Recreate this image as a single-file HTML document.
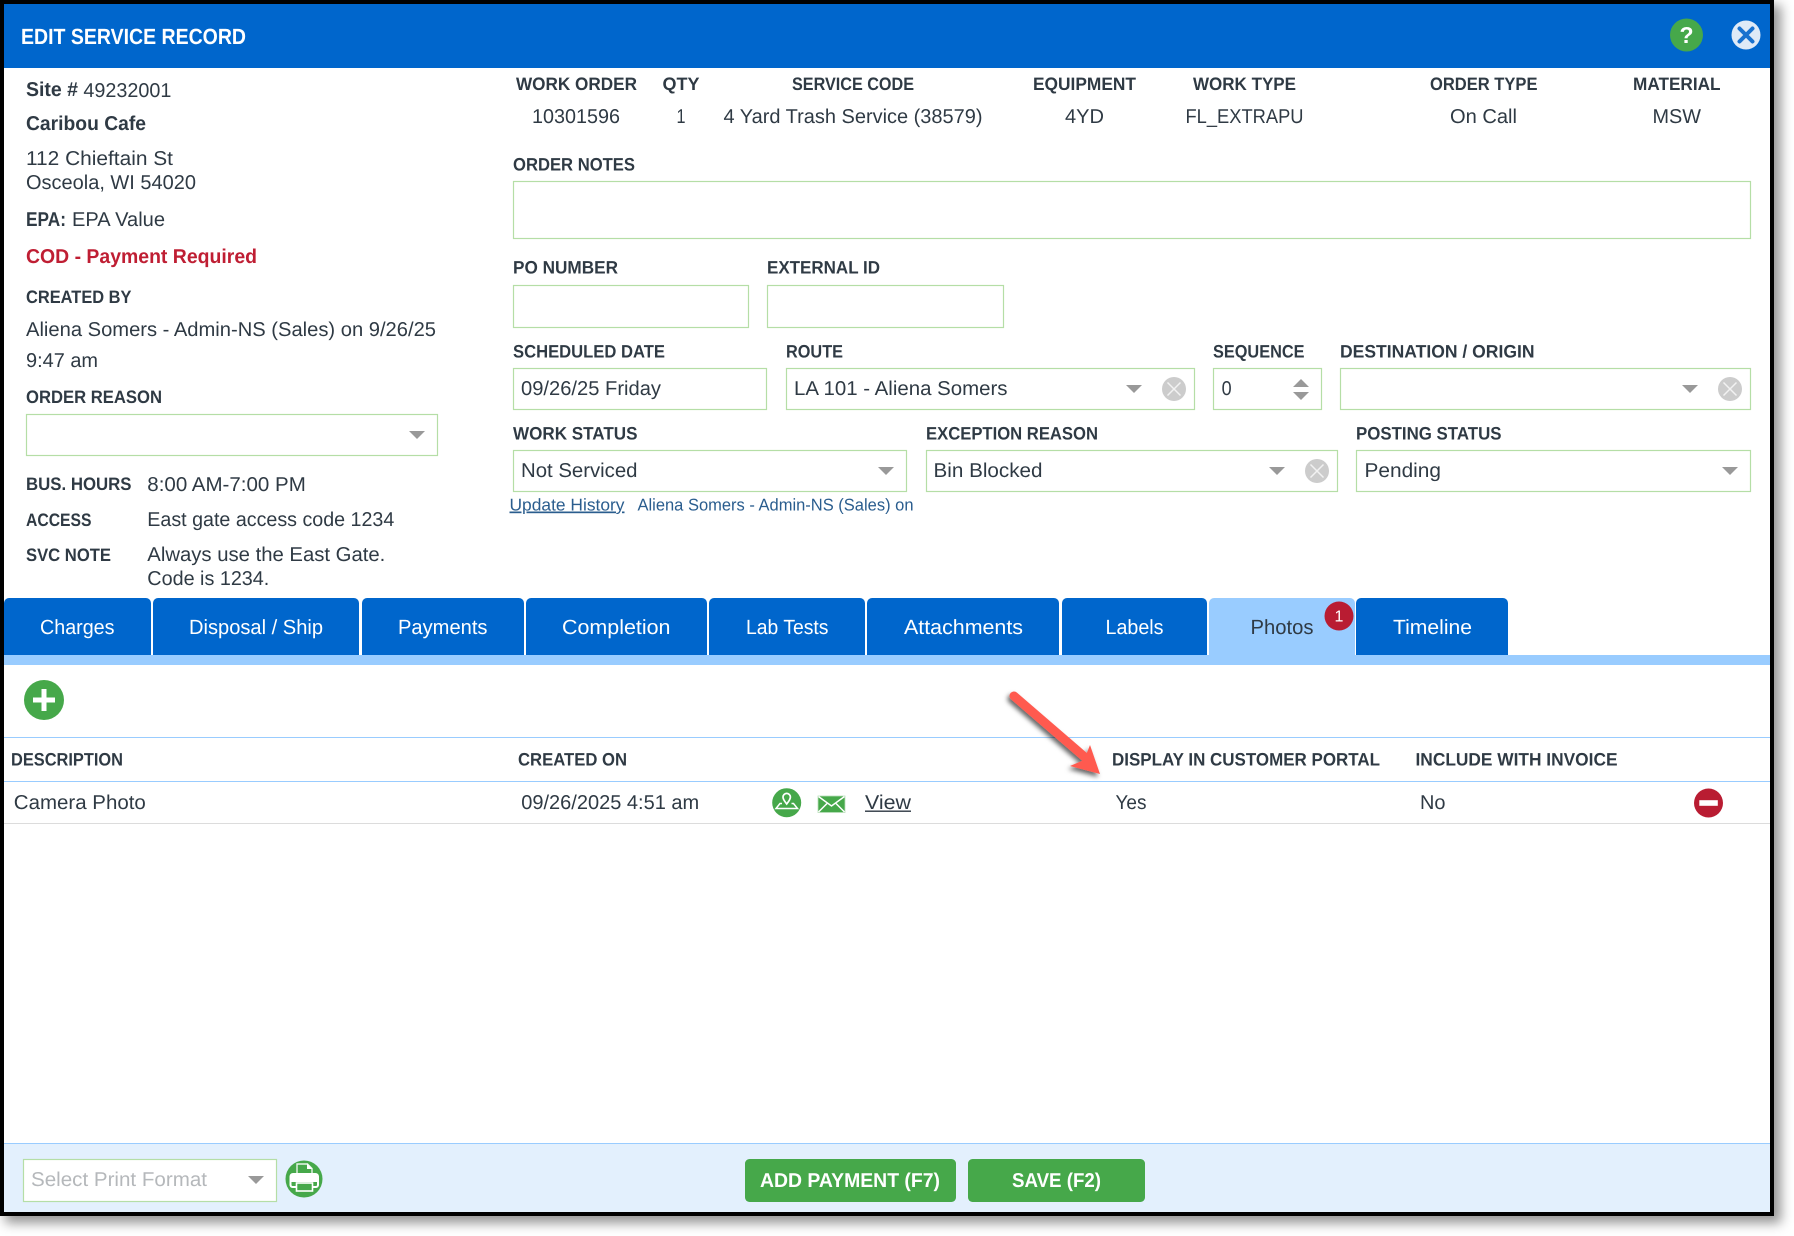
<!DOCTYPE html>
<html><head><meta charset="utf-8"><title>Edit Service Record</title>
<style>
html,body{margin:0;padding:0;background:#fff;width:1794px;height:1236px;overflow:hidden}
#frame{position:absolute;left:0;top:0;width:1774px;height:1216px;background:#000;box-shadow:6px 6px 11px 1px rgba(0,0,0,.42)}
svg{position:absolute;left:0;top:0}
text{font-family:"Liberation Sans",sans-serif;fill:#2f3a44;font-size:20px}
.b{font-weight:700;font-size:18px}
.w{fill:#fff}
.tab{fill:#fff;font-size:20.5px}
.box{fill:#fff;stroke:#b5dea6;stroke-width:1.2}
.arr{fill:#999}
</style></head><body>
<div id="frame"></div>
<svg width="1794" height="1236" viewBox="0 0 1794 1236" xmlns="http://www.w3.org/2000/svg" text-rendering="geometricPrecision">
<defs>
<filter id="sh" x="-30%" y="-30%" width="170%" height="170%"><feDropShadow dx="-2" dy="3" stdDeviation="2.5" flood-color="#000" flood-opacity=".6"/></filter>
<g id="clr"><circle r="12" fill="#ccc"/><path d="M-6.5-6.5L6.5 6.5M6.5-6.5L-6.5 6.5" stroke="#f2f2f2" stroke-width="1.5"/></g>
<path id="dd" class="arr" d="M-8-4H8L0 4Z"/>
</defs>
<rect x="4" y="4" width="1766" height="1208" fill="#fff"/>
<rect x="4" y="4" width="1766" height="64" fill="#0066cc"/>
<text x="21" y="44" class="b w" style="font-size:22px" textLength="225" lengthAdjust="spacingAndGlyphs">EDIT SERVICE RECORD</text>
<circle cx="1686.5" cy="35" r="16.5" fill="#46a84a"/>
<text x="1686.5" y="43" text-anchor="middle" class="b w" style="font-size:23px">?</text>
<circle cx="1746" cy="35" r="14.5" fill="#dfeaf7"/>
<path d="M1739.5 28.5L1752.5 41.5M1752.5 28.5L1739.5 41.5" stroke="#1a72cf" stroke-width="4" stroke-linecap="round"/>

<!-- left column -->
<text x="26" y="96" class="b" style="font-size:20px" textLength="52" lengthAdjust="spacingAndGlyphs">Site #</text>
<text x="83.4" y="97" textLength="88" lengthAdjust="spacingAndGlyphs">49232001</text>
<text x="26" y="130" class="b" style="font-size:20px" textLength="120" lengthAdjust="spacingAndGlyphs">Caribou Cafe</text>
<text x="26" y="165" textLength="147" lengthAdjust="spacingAndGlyphs">112 Chieftain St</text>
<text x="26" y="189" textLength="170" lengthAdjust="spacingAndGlyphs">Osceola, WI 54020</text>
<text x="26" y="226" class="b" style="font-size:20px" textLength="40" lengthAdjust="spacingAndGlyphs">EPA:</text>
<text x="72" y="226" textLength="93" lengthAdjust="spacingAndGlyphs">EPA Value</text>
<text x="26" y="263" class="b" style="font-size:20px;fill:#bf1e33" textLength="231" lengthAdjust="spacingAndGlyphs">COD - Payment Required</text>
<text x="26" y="303" class="b" textLength="105.5" lengthAdjust="spacingAndGlyphs">CREATED BY</text>
<text x="26" y="336" textLength="410" lengthAdjust="spacingAndGlyphs">Aliena Somers - Admin-NS (Sales) on 9/26/25</text>
<text x="26" y="367" textLength="72" lengthAdjust="spacingAndGlyphs">9:47 am</text>
<text x="26" y="403" class="b" textLength="136" lengthAdjust="spacingAndGlyphs">ORDER REASON</text>
<rect class="box" x="26.5" y="414.5" width="411" height="41"/>
<use href="#dd" x="417" y="435"/>
<text x="26" y="490" class="b" textLength="105.5" lengthAdjust="spacingAndGlyphs">BUS. HOURS</text>
<text x="147.3" y="491" textLength="158.5" lengthAdjust="spacingAndGlyphs">8:00 AM-7:00 PM</text>
<text x="26" y="526" class="b" textLength="65.5" lengthAdjust="spacingAndGlyphs">ACCESS</text>
<text x="147.3" y="526" textLength="247" lengthAdjust="spacingAndGlyphs">East gate access code 1234</text>
<text x="26" y="561" class="b" textLength="85" lengthAdjust="spacingAndGlyphs">SVC NOTE</text>
<text x="147.3" y="561" textLength="238" lengthAdjust="spacingAndGlyphs">Always use the East Gate.</text>
<text x="147.3" y="585" textLength="122" lengthAdjust="spacingAndGlyphs">Code is 1234.</text>

<!-- top row -->
<text x="516" y="90" class="b" textLength="121" lengthAdjust="spacingAndGlyphs">WORK ORDER</text>
<text x="532" y="123" textLength="88" lengthAdjust="spacingAndGlyphs">10301596</text>
<text x="662.5" y="90" class="b" textLength="37" lengthAdjust="spacingAndGlyphs">QTY</text>
<text x="676.5" y="123" textLength="9" lengthAdjust="spacingAndGlyphs">1</text>
<text x="792" y="90" class="b" textLength="122" lengthAdjust="spacingAndGlyphs">SERVICE CODE</text>
<text x="723.5" y="123" textLength="259" lengthAdjust="spacingAndGlyphs">4 Yard Trash Service (38579)</text>
<text x="1033" y="90" class="b" textLength="103" lengthAdjust="spacingAndGlyphs">EQUIPMENT</text>
<text x="1065" y="123" textLength="39" lengthAdjust="spacingAndGlyphs">4YD</text>
<text x="1193" y="90" class="b" textLength="103" lengthAdjust="spacingAndGlyphs">WORK TYPE</text>
<text x="1185.5" y="123" textLength="118" lengthAdjust="spacingAndGlyphs">FL_EXTRAPU</text>
<text x="1430" y="90" class="b" textLength="107.5" lengthAdjust="spacingAndGlyphs">ORDER TYPE</text>
<text x="1450" y="123" textLength="67" lengthAdjust="spacingAndGlyphs">On Call</text>
<text x="1633" y="90" class="b" textLength="87.5" lengthAdjust="spacingAndGlyphs">MATERIAL</text>
<text x="1652.5" y="123" textLength="48.5" lengthAdjust="spacingAndGlyphs">MSW</text>

<!-- form -->
<text x="513" y="170.5" class="b" textLength="122" lengthAdjust="spacingAndGlyphs">ORDER NOTES</text>
<rect class="box" x="513.5" y="181.5" width="1237" height="57"/>
<text x="513" y="273.5" class="b" textLength="105" lengthAdjust="spacingAndGlyphs">PO NUMBER</text>
<text x="767" y="273.5" class="b" textLength="113" lengthAdjust="spacingAndGlyphs">EXTERNAL ID</text>
<rect class="box" x="513.5" y="285.5" width="235" height="42"/>
<rect class="box" x="767.5" y="285.5" width="236" height="42"/>

<text x="513" y="357.5" class="b" textLength="152" lengthAdjust="spacingAndGlyphs">SCHEDULED DATE</text>
<text x="786" y="357.5" class="b" textLength="57" lengthAdjust="spacingAndGlyphs">ROUTE</text>
<text x="1213" y="357.5" class="b" textLength="91.5" lengthAdjust="spacingAndGlyphs">SEQUENCE</text>
<text x="1340" y="357.5" class="b" textLength="194.5" lengthAdjust="spacingAndGlyphs">DESTINATION / ORIGIN</text>
<rect class="box" x="513.5" y="368.5" width="253" height="41"/>
<rect class="box" x="786.5" y="368.5" width="408" height="41"/>
<rect class="box" x="1213.5" y="368.5" width="108" height="41"/>
<rect class="box" x="1340.5" y="368.5" width="410" height="41"/>
<text x="521" y="395" textLength="140" lengthAdjust="spacingAndGlyphs">09/26/25 Friday</text>
<text x="794" y="395" textLength="213.5" lengthAdjust="spacingAndGlyphs">LA 101 - Aliena Somers</text>
<use href="#dd" x="1134" y="389"/><use href="#clr" x="1174" y="389"/>
<text x="1221.6" y="395" textLength="10" lengthAdjust="spacingAndGlyphs">0</text>
<path class="arr" d="M1293 387L1301 379L1309 387ZM1293 392H1309L1301 400Z"/>
<use href="#dd" x="1690" y="389"/><use href="#clr" x="1730" y="389"/>

<text x="513" y="439.5" class="b" textLength="124.5" lengthAdjust="spacingAndGlyphs">WORK STATUS</text>
<text x="926" y="439.5" class="b" textLength="172" lengthAdjust="spacingAndGlyphs">EXCEPTION REASON</text>
<text x="1356" y="439.5" class="b" textLength="145.5" lengthAdjust="spacingAndGlyphs">POSTING STATUS</text>
<rect class="box" x="513.5" y="450.5" width="393" height="41"/>
<rect class="box" x="926.5" y="450.5" width="411" height="41"/>
<rect class="box" x="1356.5" y="450.5" width="394" height="41"/>
<text x="521" y="477" textLength="116.5" lengthAdjust="spacingAndGlyphs">Not Serviced</text>
<text x="933.5" y="477" textLength="109" lengthAdjust="spacingAndGlyphs">Bin Blocked</text>
<text x="1364.5" y="477" textLength="76.5" lengthAdjust="spacingAndGlyphs">Pending</text>
<use href="#dd" x="886" y="471"/><use href="#dd" x="1277" y="471"/><use href="#clr" x="1317" y="471"/><use href="#dd" x="1730" y="471"/>
<text x="509.5" y="510.5" style="font-size:17px;fill:#2a5d8e;text-decoration:underline" textLength="115" lengthAdjust="spacingAndGlyphs">Update History</text>
<text x="637.5" y="510.5" style="font-size:17px;fill:#2a5d8e" textLength="276" lengthAdjust="spacingAndGlyphs">Aliena Somers - Admin-NS (Sales) on</text>

<!-- tabs -->
<path fill="#0066cc" d="M4 655V603a5 5 0 0 1 5-5H146a5 5 0 0 1 5 5V655Z"/>
<path fill="#0066cc" d="M153 655V603a5 5 0 0 1 5-5H354a5 5 0 0 1 5 5V655Z"/>
<path fill="#0066cc" d="M362 655V603a5 5 0 0 1 5-5H519a5 5 0 0 1 5 5V655Z"/>
<path fill="#0066cc" d="M526 655V603a5 5 0 0 1 5-5H702a5 5 0 0 1 5 5V655Z"/>
<path fill="#0066cc" d="M709 655V603a5 5 0 0 1 5-5H860a5 5 0 0 1 5 5V655Z"/>
<path fill="#0066cc" d="M867 655V603a5 5 0 0 1 5-5H1054a5 5 0 0 1 5 5V655Z"/>
<path fill="#0066cc" d="M1062 655V603a5 5 0 0 1 5-5H1202a5 5 0 0 1 5 5V655Z"/>
<path fill="#99ccff" d="M1209 655V603a5 5 0 0 1 5-5H1350a5 5 0 0 1 5 5V655Z"/>
<path fill="#0066cc" d="M1356 655V603a5 5 0 0 1 5-5H1503a5 5 0 0 1 5 5V655Z"/>
<rect x="4" y="655" width="1766" height="10" fill="#99ccff"/>
<text x="40" y="634" class="tab" textLength="74.5" lengthAdjust="spacingAndGlyphs">Charges</text>
<text x="189" y="634" class="tab" textLength="134" lengthAdjust="spacingAndGlyphs">Disposal / Ship</text>
<text x="398" y="634" class="tab" textLength="89.5" lengthAdjust="spacingAndGlyphs">Payments</text>
<text x="562" y="634" class="tab" textLength="108.5" lengthAdjust="spacingAndGlyphs">Completion</text>
<text x="746" y="634" class="tab" textLength="82.5" lengthAdjust="spacingAndGlyphs">Lab Tests</text>
<text x="904" y="634" class="tab" textLength="119" lengthAdjust="spacingAndGlyphs">Attachments</text>
<text x="1105.5" y="634" class="tab" textLength="58" lengthAdjust="spacingAndGlyphs">Labels</text>
<text x="1250.5" y="634" class="tab" style="fill:#2f3a44" textLength="63" lengthAdjust="spacingAndGlyphs">Photos</text>
<text x="1393" y="634" class="tab" textLength="79" lengthAdjust="spacingAndGlyphs">Timeline</text>
<circle cx="1339" cy="616" r="14.5" fill="#b91c32"/>
<text x="1339" y="621.5" text-anchor="middle" class="w" style="font-size:16px">1</text>

<!-- table -->
<circle cx="44" cy="700" r="20" fill="#46a84a"/>
<path d="M44 689V711M33 700H55" stroke="#fff" stroke-width="5"/>
<rect x="4" y="737" width="1766" height="1" fill="#99ccff"/>
<rect x="4" y="781" width="1766" height="1" fill="#99ccff"/>
<rect x="4" y="823" width="1766" height="1" fill="#dcdcdc"/>
<text x="11" y="765.5" class="b" textLength="112" lengthAdjust="spacingAndGlyphs">DESCRIPTION</text>
<text x="518" y="765.5" class="b" textLength="109" lengthAdjust="spacingAndGlyphs">CREATED ON</text>
<text x="1112" y="765.5" class="b" textLength="268" lengthAdjust="spacingAndGlyphs">DISPLAY IN CUSTOMER PORTAL</text>
<text x="1415.5" y="765.5" class="b" textLength="202" lengthAdjust="spacingAndGlyphs">INCLUDE WITH INVOICE</text>
<text x="13.8" y="809" textLength="132" lengthAdjust="spacingAndGlyphs">Camera Photo</text>
<text x="521.2" y="809" textLength="178" lengthAdjust="spacingAndGlyphs">09/26/2025 4:51 am</text>
<circle cx="786.7" cy="802.7" r="14.5" fill="#46a84a"/>
<path d="M786.7 804c-2.2-2.9-3.7-4.6-3.7-6.9a3.7 3.7 0 0 1 7.4 0c0 2.3-1.5 4-3.7 6.9Z" fill="none" stroke="#fff" stroke-width="1.7"/>
<path d="M782 803.5H780L776 808.5H797.5L793.5 803.5H791.5" fill="none" stroke="#fff" stroke-width="1.5"/>
<rect x="818" y="796" width="27" height="16.5" fill="#46a84a" stroke="#b9dfba" stroke-width=".8"/>
<path d="M818.5 796.5L831.5 806L844.5 796.5M818.5 812L827.5 803M844.5 812L835.5 803" fill="none" stroke="#fff" stroke-width="1.5"/>
<text x="865" y="809" textLength="46" lengthAdjust="spacingAndGlyphs">View</text>
<rect x="865" y="810.5" width="46" height="1.4" fill="#2f3a44"/>
<text x="1115.5" y="809" textLength="31" lengthAdjust="spacingAndGlyphs">Yes</text>
<text x="1420" y="809" textLength="25.5" lengthAdjust="spacingAndGlyphs">No</text>
<circle cx="1708.5" cy="803" r="14.5" fill="#b91c32"/>
<rect x="1699.3" y="800.2" width="18.5" height="5.6" fill="#fff"/>

<!-- red arrow -->
<g filter="url(#sh)">
<path d="M1014 696L1087 759" stroke="#ff5a4f" stroke-width="9" stroke-linecap="round"/>
<path d="M1090 745L1100 774L1070 766L1084 760Z" fill="#ff5a4f"/>
</g>

<!-- footer -->
<rect x="4" y="1143" width="1766" height="69" fill="#e3f0fd"/>
<rect x="4" y="1143" width="1766" height="1" fill="#99ccff"/>
<rect class="box" x="23.5" y="1159.5" width="253" height="42"/>
<text x="31" y="1186" style="fill:#b5b8bb" textLength="176" lengthAdjust="spacingAndGlyphs">Select Print Format</text>
<use href="#dd" x="256" y="1180"/>
<circle cx="304" cy="1179" r="18.5" fill="#46a84a"/>
<path d="M297 1174V1164H307.5L312 1168.5V1174" fill="none" stroke="#e9f5e9" stroke-width="1.4"/>
<path d="M307 1163.5V1169H312.5Z" fill="#fff"/>
<path d="M296 1174H293a2.5 2.5 0 0 0-2.5 2.5V1185a2 2 0 0 0 2 2H296M312.5 1187H316a2 2 0 0 0 2-2V1176.5a2.5 2.5 0 0 0-2.5-2.5H296" fill="none" stroke="#fff" stroke-width="2"/>
<rect x="291" y="1175" width="27" height="7" fill="#fff"/>
<rect x="296.5" y="1183" width="16" height="8" fill="#46a84a" stroke="#fff" stroke-width="1.6"/>
<rect x="745" y="1159" width="211" height="43" rx="4.5" fill="#46a84a"/>
<rect x="968" y="1159" width="177" height="43" rx="4.5" fill="#46a84a"/>
<text x="760" y="1187" class="b w" style="font-size:20px" textLength="180" lengthAdjust="spacingAndGlyphs">ADD PAYMENT (F7)</text>
<text x="1012" y="1187" class="b w" style="font-size:20px" textLength="89" lengthAdjust="spacingAndGlyphs">SAVE (F2)</text>
</svg>
</body></html>
